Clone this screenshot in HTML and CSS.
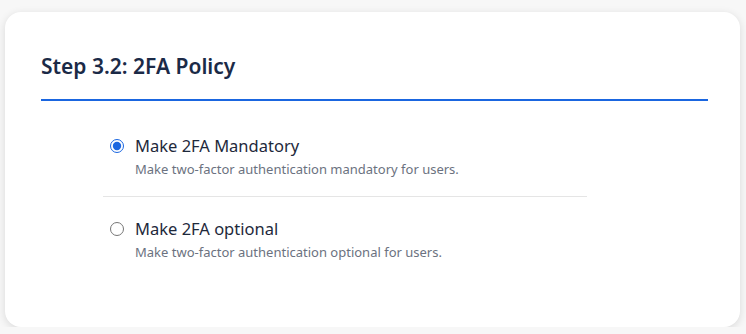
FILE: index.html
```html
<!DOCTYPE html>
<html lang="en">
<head>
    <meta charset="UTF-8">
    <meta name="viewport" content="width=device-width, initial-scale=1.0">
    <title>2FA Policy</title>
    <link rel="stylesheet" href="styles.css">
</head>
<body>
    <div class="card">
        <h2 class="step-title">Step 3.2: 2FA Policy</h2>
        <div class="options">
            <label class="option">
                <input type="radio" name="policy" value="mandatory" checked>
                <span class="option-text">
                    <span class="option-label">Make 2FA Mandatory</span>
                    <span class="option-desc">Make two-factor authentication mandatory for users.</span>
                </span>
            </label>
            <label class="option">
                <input type="radio" name="policy" value="optional">
                <span class="option-text">
                    <span class="option-label">Make 2FA optional</span>
                    <span class="option-desc">Make two-factor authentication optional for users.</span>
                </span>
            </label>
        </div>
    </div>
</body>
</html>
```

FILE: styles.css
```css
body {
    font-family: "Noto Sans", "Open Sans", sans-serif;
    margin: 0;
    padding: 12px 6px 0 5px;
    background-color: #f7f7f7;
}
.card {
    background: white;
    border-radius: 16px;
    box-shadow: 0 2px 8px rgba(0, 0, 0, 0.12);
    padding: 40px 32px 38px 36px;
    height: 237px;
}
.step-title {
    margin: 0;
    padding-bottom: 19px;
    font-size: 21px;
    font-weight: 600;
    color: #1b2a47;
    border-bottom: 2px solid #1a66e0;
}
.options {
    width: 484px;
    margin: 23px 0 0 62px;
}
.option {
    display: flex;
    align-items: flex-start;
    gap: 11px;
    padding: 10px 7px 18px;
    cursor: pointer;
}
.option + .option {
    border-top: 1px solid #e5e5e5;
    padding-top: 20px;
}
.option input {
    width: 14px;
    height: 14px;
    margin: 5px 0 0;
    accent-color: #1a66e0;
}
.option-text {
    display: flex;
    flex-direction: column;
    gap: 3px;
}
.option-label {
    font-size: 16.5px;
    color: #1e293b;
}
.option-desc {
    font-size: 13px;
    color: #6b7280;
}
```
